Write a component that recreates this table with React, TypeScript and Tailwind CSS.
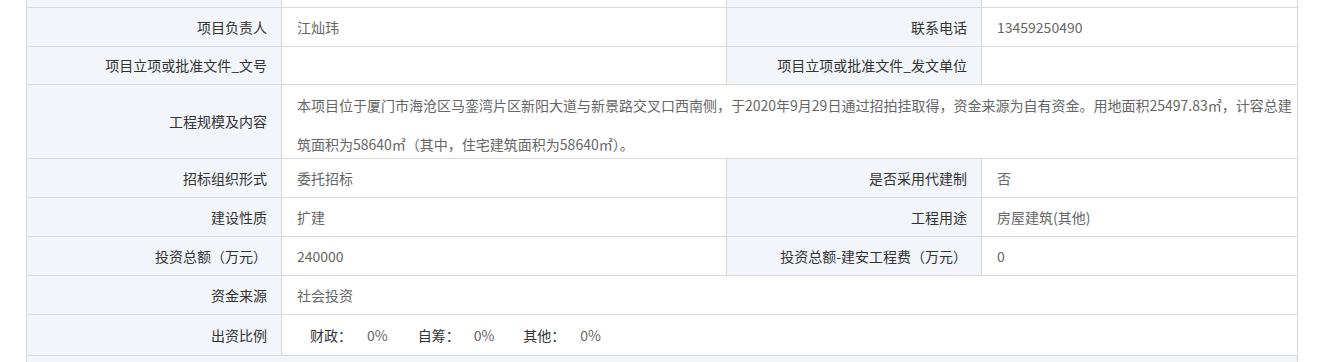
import React from "react";

const font = { fontFamily: '"Noto Sans CJK SC", "Microsoft YaHei", sans-serif' };

type Row = { l1: string; v1: React.ReactNode; l2?: string; v2?: React.ReactNode; h: string };

function Label({ children, h }: { children?: React.ReactNode; h: string }) {
    return (
        <div
            className={`${h} flex items-center justify-end pr-[14px] bg-[#f2f5fa] border-r border-b border-[#d9d9d9] text-[14px] text-[#333]`}
        >
            {children}
        </div>
    );
}

function Value({ children, h, span }: { children?: React.ReactNode; h: string; span?: boolean }) {
    return (
        <div
            className={`${h} flex items-center pl-[15px] bg-white border-r border-b border-[#d9d9d9] text-[14px] text-[#666] ${
                span ? "col-span-3" : ""
            }`}
        >
            {children}
        </div>
    );
}

export default function App() {
    const rows: Row[] = [
        { l1: "项目负责人", v1: "江灿玮", l2: "联系电话", v2: "13459250490", h: "h-[39px]" },
        { l1: "项目立项或批准文件_文号", v1: "", l2: "项目立项或批准文件_发文单位", v2: "", h: "h-[38px]" },
    ];
    const rows2: Row[] = [
        { l1: "招标组织形式", v1: "委托招标", l2: "是否采用代建制", v2: "否", h: "h-[39px]" },
        { l1: "建设性质", v1: "扩建", l2: "工程用途", v2: "房屋建筑(其他)", h: "h-[39px]" },
        { l1: "投资总额（万元）", v1: "240000", l2: "投资总额-建安工程费（万元）", v2: "0", h: "h-[39px]" },
    ];

    return (
        <div className="w-[1326px] h-[362px] bg-white overflow-hidden" style={font}>
            <div className="ml-[26px] w-[1272px] border-l border-[#d9d9d9] grid grid-cols-[255px_445px_255px_316px]">
                {/* cut-off row at the top */}
                <Label h="h-[8px]" />
                <Value h="h-[8px]" />
                <Label h="h-[8px]" />
                <Value h="h-[8px]" />

                {rows.map((r) => (
                    <React.Fragment key={r.l1}>
                        <Label h={r.h}>{r.l1}</Label>
                        <Value h={r.h}>{r.v1}</Value>
                        <Label h={r.h}>{r.l2}</Label>
                        <Value h={r.h}>{r.v2}</Value>
                    </React.Fragment>
                ))}

                <Label h="h-[74px]">工程规模及内容</Label>
                <div className="col-span-3 h-[74px] pl-[15px] bg-white border-r border-b border-[#d9d9d9] text-[14px] text-[#666] leading-[40px] overflow-hidden">
                    <div className="whitespace-nowrap">
                        本项目位于厦门市海沧区马銮湾片区新阳大道与新景路交叉口西南侧，于2020年9月29日通过招拍挂取得，资金来源为自有资金。用地面积25497.83㎡，计容总建
                    </div>
                    <div className="whitespace-nowrap -mt-[1px]">
                        筑面积为58640㎡（其中，住宅建筑面积为58640㎡）。
                    </div>
                </div>

                {rows2.map((r) => (
                    <React.Fragment key={r.l1}>
                        <Label h={r.h}>{r.l1}</Label>
                        <Value h={r.h}>{r.v1}</Value>
                        <Label h={r.h}>{r.l2}</Label>
                        <Value h={r.h}>{r.v2}</Value>
                    </React.Fragment>
                ))}

                <Label h="h-[39px]">资金来源</Label>
                <Value h="h-[39px]" span>
                    社会投资
                </Value>

                <Label h="h-[41px]">出资比例</Label>
                <Value h="h-[41px]" span>
                    <span className="ml-[13px] text-[#333]">财政：</span>
                    <span className="ml-[15px]">0%</span>
                    <span className="ml-[30px] text-[#333]">自筹：</span>
                    <span className="ml-[14px]">0%</span>
                    <span className="ml-[29px] text-[#333]">其他：</span>
                    <span className="ml-[15px]">0%</span>
                </Value>

                <div className="col-span-4 h-[10px] bg-[#f2f5fa] border-r border-[#d9d9d9]" />
            </div>
        </div>
    );
}
